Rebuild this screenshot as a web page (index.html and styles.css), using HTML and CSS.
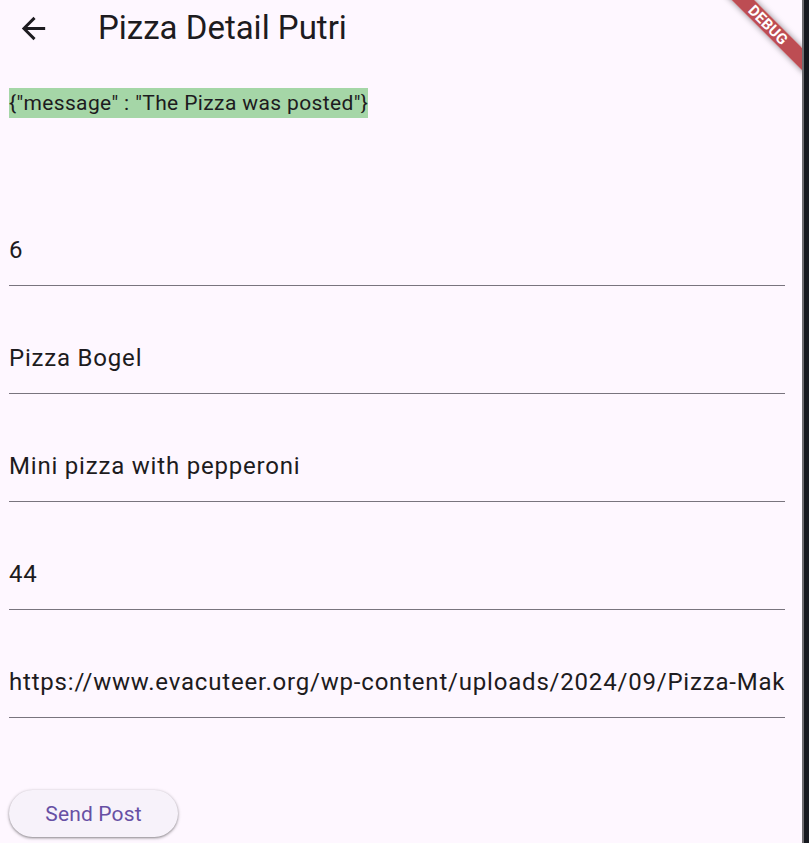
FILE: index.html
```html
<!DOCTYPE html>
<html lang="en">
<head>
<meta charset="utf-8">
<title>Pizza Detail Putri</title>
<link rel="stylesheet" href="styles.css">
</head>
<body>
<div class="window">
  <div class="app">
    <header class="app-bar">
      <button class="back-btn" aria-label="Back">
        <svg class="back-icon" viewBox="0 0 24 24" width="35" height="35"><path d="M20 11H7.83l5.59-5.59L12 4l-8 8 8 8 1.41-1.41L7.83 13H20v-2z" fill="#1D1B20"/></svg>
      </button>
      <h1 class="title">Pizza Detail Putri</h1>
    </header>
    <main class="content">
      <div class="message">{"message" : "The Pizza was posted"}</div>
      <div class="fields">
        <div class="field"><div class="field-input">6</div></div>
        <div class="field"><div class="field-input">Pizza Bogel</div></div>
        <div class="field"><div class="field-input">Mini pizza with pepperoni</div></div>
        <div class="field"><div class="field-input">44</div></div>
        <div class="field"><div class="field-input">https://www.evacuteer.org/wp-content/uploads/2024/09/Pizza-Making-Class-New-Orleans.jpg</div></div>
      </div>
      <button class="send-btn">Send Post</button>
    </main>
    <div class="debug-banner">DEBUG</div>
  </div>
  <div class="edge"><div class="edge-line"></div><div class="edge-dark"></div></div>
</div>
</body>
</html>
```
FILE: styles.css
```css
html, body {
  margin: 0;
  padding: 0;
  height: 100%;
}
body {
  background: #FEF7FF;
  font-family: Roboto, "Noto Sans", sans-serif;
  color: #1D1B20;
  overflow: hidden;
}
.window {
  display: flex;
  height: 843px;
  width: 809px;
}
.app {
  position: relative;
  overflow: hidden;
  width: 802px;
  height: 843px;
  background: #FEF7FF;
}
.edge {
  display: flex;
  width: 7px;
  height: 843px;
}
.edge-line {
  width: 2px;
  background: #6e6c70;
}
.edge-dark {
  flex: 1;
  background: #16181e;
}
.app-bar {
  display: flex;
  align-items: center;
  height: 56px;
}
.back-btn {
  display: flex;
  align-items: center;
  justify-content: center;
  margin: 0 0 0 16px;
  padding: 0;
  border: 0;
  background: none;
  width: 35px;
  height: 35px;
  position: relative;
  top: 0.5px;
}
.back-icon {
  display: block;
}
.title {
  margin: 0 0 0 47px;
  font-size: 33px;
  line-height: 42px;
  font-weight: 400;
  color: #1D1B20;
}
.content {
  padding: 0 17px 0 9px;
}
.message {
  display: inline-block;
  margin-top: 32px;
  background: #A5D6A7;
  font-size: 21px;
  line-height: 30px;
  letter-spacing: 0.375px;
  color: #1D1B20;
}
.fields {
  margin-top: 60px;
}
.field {
  padding-top: 54px;
}
.field-input {
  font-size: 24px;
  line-height: 36px;
  letter-spacing: 0.8px;
  padding-bottom: 17px;
  border-bottom: 1px solid #79747E;
  white-space: nowrap;
  overflow: hidden;
  color: #1D1B20;
}
.send-btn {
  display: block;
  margin-top: 72px;
  width: 169px;
  height: 47px;
  border: 0;
  border-radius: 23.5px;
  background: #F7F2FA;
  color: #6750A4;
  font-family: Roboto, "Noto Sans", sans-serif;
  font-size: 21px;
  font-weight: 400;
  letter-spacing: 0.15px;
  box-shadow: 0 1px 2px rgba(0,0,0,0.3), 0 1px 3px 1px rgba(0,0,0,0.15);
  padding: 0;
}
.debug-banner {
  position: absolute;
  left: 708px;
  top: 17px;
  width: 120px;
  height: 16px;
  line-height: 16px;
  transform: rotate(45deg);
  background: rgba(170, 30, 35, 0.78);
  color: #fff;
  font-size: 15px;
  font-weight: 700;
  text-align: center;
  letter-spacing: 0.2px;
  box-shadow: 0 0 6px rgba(0,0,0,0.45);
}
```
